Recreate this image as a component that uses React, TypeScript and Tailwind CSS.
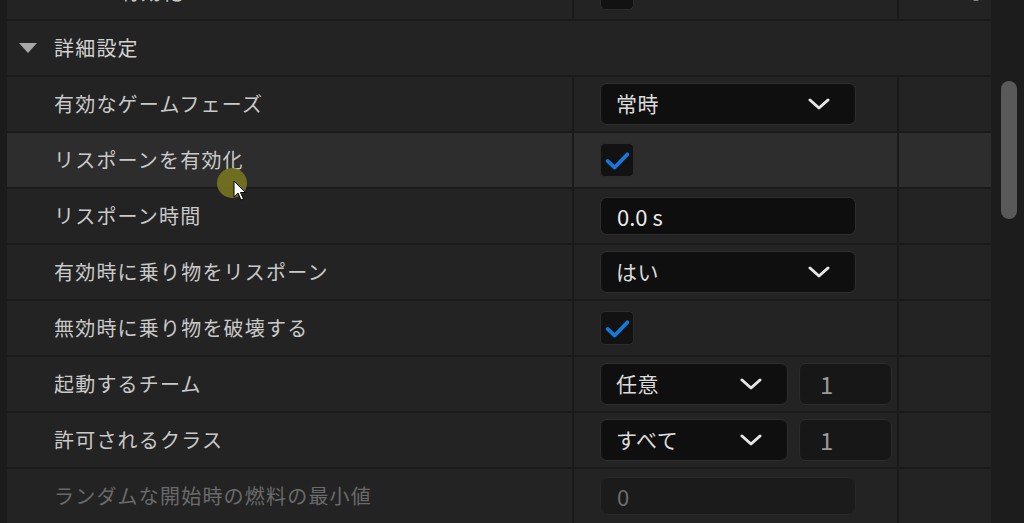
import React from "react";

const FONT = { fontFamily: '"Noto Sans CJK JP", "Noto Sans", sans-serif' };

function Chevron() {
  return (
    <svg width="22" height="14" viewBox="0 0 22 14" className="shrink-0">
      <polyline points="2,3 11,11 20,3" fill="none" stroke="#e6e6e6" strokeWidth="3" strokeLinecap="round" strokeLinejoin="round" />
    </svg>
  );
}

function Dropdown({ label, wide }: { label: string; wide?: boolean }) {
  return (
    <div
      className={`h-[42px] ${wide ? "w-[256px]" : "w-[188px]"} flex items-center justify-between pl-[15px] pr-[25px] rounded-[7px] bg-[#0f0f0f] border border-[#2f2f2f] text-[#dcdcdc] text-[21px] tracking-[0.5px]`}
    >
      <span>{label}</span>
      <Chevron />
    </div>
  );
}

function NumBox() {
  return (
    <div className="h-[42px] w-[93px] flex items-center pl-[20px] rounded-[7px] bg-[#171717] border border-[#2c2c2c] text-[#9a9a9a] text-[24px]">
      1
    </div>
  );
}

function Checkbox() {
  return (
    <div className="w-[34px] h-[34px] rounded-[5px] bg-[#121212] border border-[#2c2c2c] flex items-center justify-center">
      <svg width="34" height="34" viewBox="0 0 34 34">
        <polyline points="7,18 14.5,25 28,11" fill="none" stroke="#1678dc" strokeWidth="4" strokeLinecap="round" strokeLinejoin="round" />
      </svg>
    </div>
  );
}

function TextInput({ value, disabled }: { value: string; disabled?: boolean }) {
  return (
    <div
      className={`h-[38px] w-[256px] flex items-center pl-[16px] rounded-[7px] border ${disabled ? "bg-[#1b1b1b] border-[#282828] text-[#6e6e6e]" : "bg-[#0e0e0e] border-[#2e2e2e] text-[#ececec]"} text-[22px]`}
    >
      {value}
    </div>
  );
}

function Row({
  label,
  children,
  hover,
  disabled,
}: {
  label: string;
  children?: React.ReactNode;
  hover?: boolean;
  disabled?: boolean;
}) {
  const bg = hover ? "bg-[#2d2d2d]" : "bg-[#232323]";
  return (
    <div className="h-[54px] flex gap-[2px] shrink-0">
      <div className={`w-[565px] ${bg} flex items-center pl-[47px] text-[20px] tracking-[1.2px] ${disabled ? "text-[#6a6a6a]" : "text-[#c9c9c9]"}`}>
        {label}
      </div>
      <div className={`w-[323px] ${bg} flex items-center gap-[11px] pl-[26px]`}>{children}</div>
      <div className={`flex-1 ${bg}`} />
    </div>
  );
}

export default function App() {
  return (
    <div className="w-[1024px] h-[523px] overflow-hidden flex bg-[#1c1c1c] relative" style={FONT}>
      <div className="w-[7px] bg-[#1b1b1b] shrink-0" />
      <div className="w-[984px] flex flex-col gap-[2px] mt-[-35px] bg-[#1a1a1a] shrink-0">
        {/* partially visible top row */}
        <div className="h-[54px] flex gap-[2px] shrink-0">
          <div className="w-[565px] bg-[#232323] flex items-center pl-[113px] text-[20px] tracking-[1.2px] text-[#c9c9c9]">
            有効化
          </div>
          <div className="w-[323px] bg-[#232323] flex items-center pl-[26px] pt-[2px]">
            <div className="w-[34px] h-[34px] rounded-[5px] bg-[#121212] border border-[#2c2c2c]" />
          </div>
          <div className="flex-1 bg-[#232323] relative">
            <div className="absolute left-[74px] top-[32px] w-[6px] h-[4px] rounded-full bg-[#8a8a8a]" />
          </div>
        </div>
        {/* section header */}
        <div className="h-[54px] bg-[#232323] flex items-center shrink-0">
          <svg width="18" height="11" viewBox="0 0 18 11" className="ml-[12px] mt-[1px]">
            <polygon points="0,0 18,0 9,10" fill="#a8a8a8" />
          </svg>
          <span className="ml-[17px] text-[20px] tracking-[1.2px] text-[#d2d2d2]">詳細設定</span>
        </div>
        <Row label="有効なゲームフェーズ">
          <Dropdown label="常時" wide />
        </Row>
        <Row label="リスポーンを有効化" hover>
          <Checkbox />
        </Row>
        <Row label="リスポーン時間">
          <TextInput value="0.0 s" />
        </Row>
        <Row label="有効時に乗り物をリスポーン">
          <Dropdown label="はい" wide />
        </Row>
        <Row label="無効時に乗り物を破壊する">
          <Checkbox />
        </Row>
        <Row label="起動するチーム">
          <Dropdown label="任意" />
          <NumBox />
        </Row>
        <Row label="許可されるクラス">
          <Dropdown label="すべて" />
          <NumBox />
        </Row>
        <Row label="ランダムな開始時の燃料の最小値" disabled>
          <TextInput value="0" disabled />
        </Row>
      </div>
      <div className="flex-1 bg-[#1c1c1c] flex justify-center">
        <div className="mt-[81px] w-[16px] h-[138px] rounded-full bg-[#595959] ml-[2px]" />
      </div>

      {/* cursor highlight + pointer */}
      <div className="absolute left-[217px] top-[168px] w-[30px] h-[30px] rounded-full bg-[#77741f] opacity-90" />
      <svg className="absolute left-[233px] top-[180px]" width="16" height="24" viewBox="0 0 16 24">
        <path d="M1 1 L1 17 L5 13 L8 20 L10.5 19 L7.5 12.5 L12.5 12.5 Z" fill="#ffffff" stroke="#000000" strokeWidth="1" strokeLinejoin="round" />
      </svg>
    </div>
  );
}
